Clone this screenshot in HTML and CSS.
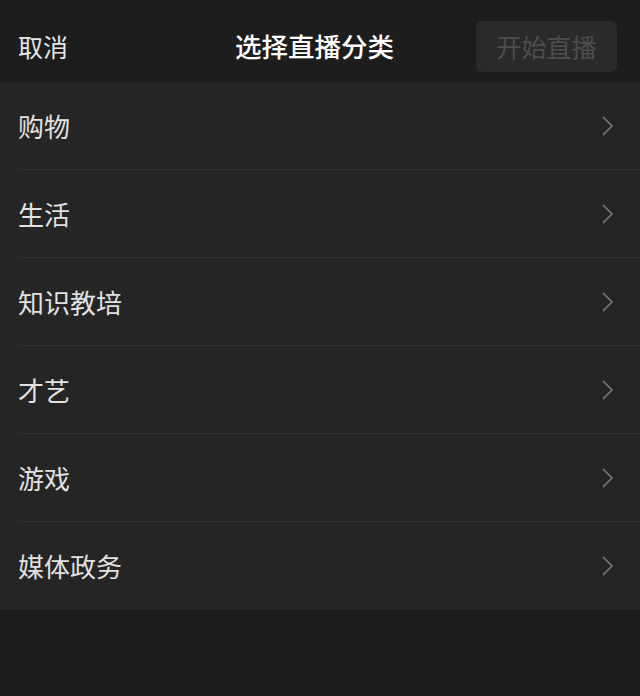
FILE: index.html
```html
<!DOCTYPE html>
<html lang="zh-CN">
<head>
<meta charset="utf-8">
<link rel="stylesheet" href="styles.css">
</head>
<body>
<div class="page">
  <header class="topbar">
    <span class="cancel">取消</span>
    <span class="title">选择直播分类</span>
    <span class="start-btn">开始直播</span>
  </header>
  <ul class="list">
    <li class="row"><span class="label">购物</span><svg class="chev" viewBox="0 0 12 20"><path d="M1.5 1.5 L10 10 L1.5 18.5" /></svg></li>
    <li class="row"><span class="label">生活</span><svg class="chev" viewBox="0 0 12 20"><path d="M1.5 1.5 L10 10 L1.5 18.5" /></svg></li>
    <li class="row"><span class="label">知识教培</span><svg class="chev" viewBox="0 0 12 20"><path d="M1.5 1.5 L10 10 L1.5 18.5" /></svg></li>
    <li class="row"><span class="label">才艺</span><svg class="chev" viewBox="0 0 12 20"><path d="M1.5 1.5 L10 10 L1.5 18.5" /></svg></li>
    <li class="row"><span class="label">游戏</span><svg class="chev" viewBox="0 0 12 20"><path d="M1.5 1.5 L10 10 L1.5 18.5" /></svg></li>
    <li class="row"><span class="label">媒体政务</span><svg class="chev" viewBox="0 0 12 20"><path d="M1.5 1.5 L10 10 L1.5 18.5" /></svg></li>
  </ul>
</div>
</body>
</html>
```
FILE: styles.css
```css
html, body {
  margin: 0;
  padding: 0;
  background: #1c1c1c;
}
body {
  font-family: "Noto Sans CJK SC", "Noto Sans", sans-serif;
}
.page {
  width: 640px;
  height: 696px;
  background: #1c1c1c;
}
.topbar {
  height: 82px;
  display: grid;
  grid-template-columns: 1fr auto 1fr;
  align-items: center;
  padding: 10px 23px 0 18px;
  box-sizing: border-box;
  background: #1d1d1d;
}
.cancel {
  font-size: 25px;
  color: #e6e6e6;
  justify-self: start;
  line-height: 1;
}
.title {
  font-size: 26.5px;
  font-weight: 500;
  color: #ffffff;
  line-height: 1;
  padding-right: 6px;
}
.start-btn {
  justify-self: end;
  width: 141px;
  height: 51px;
  display: flex;
  align-items: center;
  justify-content: center;
  background: #2a2a2a;
  border-radius: 6px;
  color: #4d4d4d;
  font-size: 25px;
  line-height: 1;
}
.list {
  list-style: none;
  margin: 0;
  padding: 0 0 0 18px;
  background: #252525;
}
.row {
  height: 88px;
  display: flex;
  align-items: center;
  justify-content: space-between;
  padding-right: 26px;
  border-bottom: 1px solid #2f2f2f;
  box-sizing: border-box;
}
.row:last-child {
  border-bottom: none;
}
.label {
  font-size: 26px;
  color: #e2e2e2;
  line-height: 1;
}
.chev {
  width: 12px;
  height: 20px;
  fill: none;
  stroke: #686868;
  stroke-width: 2;
  stroke-linecap: round;
  stroke-linejoin: round;
}
```
